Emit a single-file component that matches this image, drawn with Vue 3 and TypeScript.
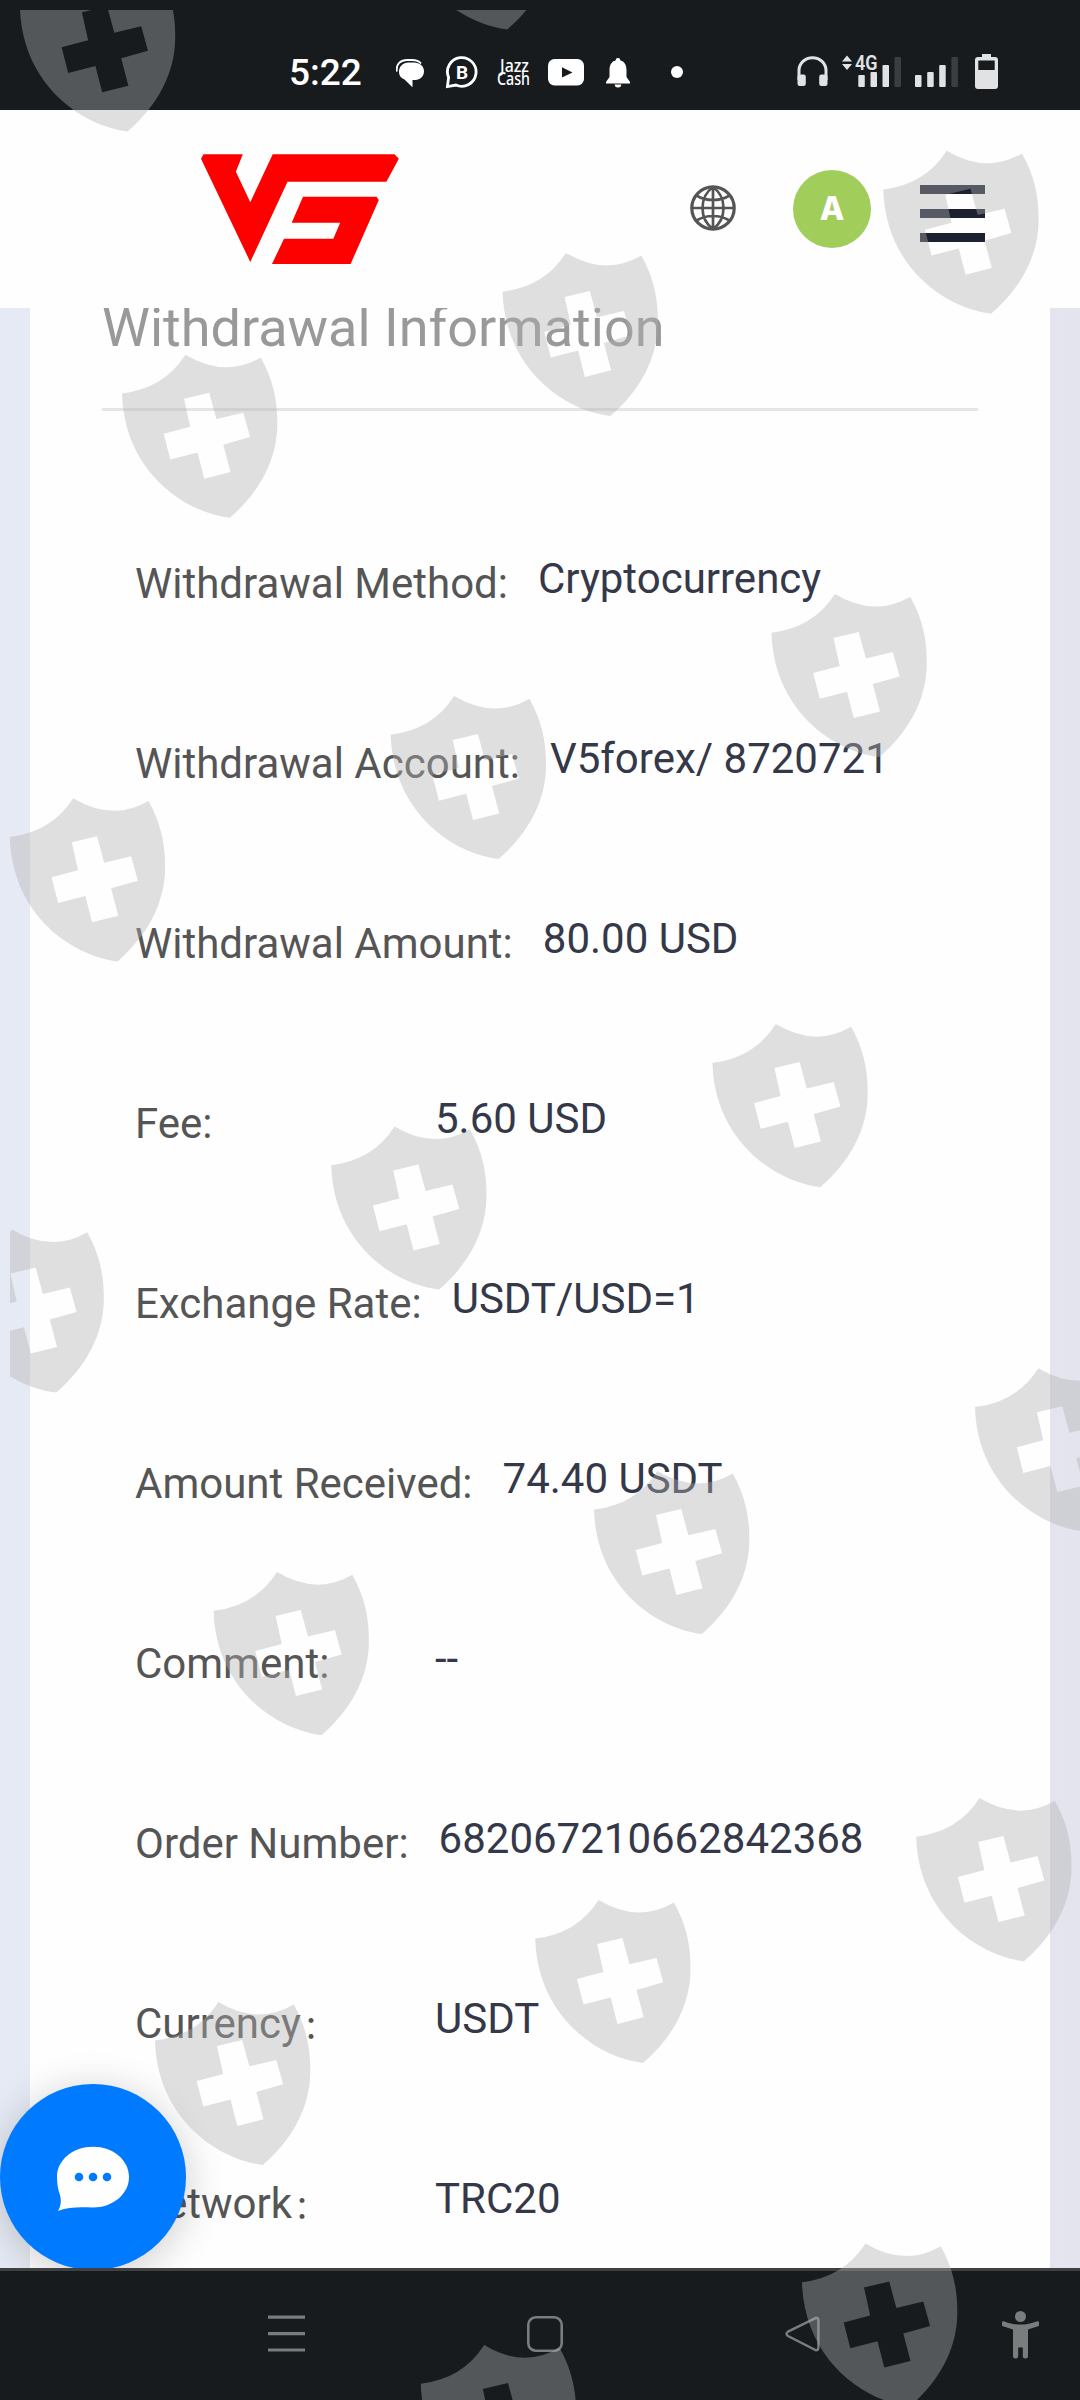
<script setup lang="ts">
interface Field {
  label: string
  colon: string
  value: string
}

interface Mark {
  x: number
  y: number
}

const fields: Field[] = [
  { label: 'Withdrawal Method', colon: ':', value: 'Cryptocurrency' },
  { label: 'Withdrawal Account', colon: ':', value: 'V5forex/ 8720721' },
  { label: 'Withdrawal Amount', colon: ':', value: '80.00 USD' },
  { label: 'Fee', colon: ':', value: '5.60 USD' },
  { label: 'Exchange Rate', colon: ':', value: 'USDT/USD=1' },
  { label: 'Amount Received', colon: ':', value: '74.40 USDT' },
  { label: 'Comment', colon: ':', value: '--' },
  { label: 'Order Number', colon: ':', value: '682067210662842368' },
  { label: 'Currency', colon: '：', value: 'USDT' },
  { label: 'Network', colon: '：', value: 'TRC20' },
]

// Watermark stamps, tiled over the whole screen
const marks: Mark[] = [
  { x: 19.9, y: -32 },
  { x: 399.4, y: -134 },
  { x: 883.3, y: 150.4 },
  { x: 502.6, y: 252.6 },
  { x: 122, y: 354.4 },
  { x: 771.5, y: 593.7 },
  { x: 390.7, y: 695.7 },
  { x: 9.8, y: 798 },
  { x: 712.4, y: 1023.8 },
  { x: 331.2, y: 1126.2 },
  { x: -51.5, y: 1229.2 },
  { x: 975, y: 1368 },
  { x: 594, y: 1470.6 },
  { x: 213.6, y: 1571.8 },
  { x: 916.2, y: 1797.8 },
  { x: 535.2, y: 1899.6 },
  { x: 155, y: 2001.6 },
  { x: 802, y: 2243.2 },
  { x: 420.8, y: 2344.8 },
]
</script>

<template>
  <div class="screen">
    <div class="statusbar">
      <span class="time">5:22</span>
      <svg class="s-chat" width="28" height="28" viewBox="0 0 28 28">
        <path d="M.9 12.500C-.5 5 5 1 11 1h5c4 0 7 1 9 3.500" fill="none" stroke="#fff" stroke-width="1.900" />
        <path d="M12.500 3.500h5c6.500 0 10.500 3.800 10.500 8.800s-4 8.700-8.500 8.700H16.500V28.300L8.500 20.500C4.500 19 3 16 3 12.500c0-5 4-9 9.500-9z" fill="#fff" />
      </svg>
      <svg class="s-biz" width="34" height="34" viewBox="0 0 34 34">
        <path d="M3.600 22.500A14.300 14.300 0 1 1 11 30L2.400 31.600z" fill="none" stroke="#fff" stroke-width="2.800" />
        <text x="17" y="23.600" text-anchor="middle" font-family="Roboto, sans-serif" font-weight="700" font-size="19" fill="#fff">B</text>
      </svg>
      <svg class="s-jazz" width="33" height="34" viewBox="0 0 33 34" font-family="'Noto Sans', sans-serif" font-weight="500" font-size="18" fill="#fff">
        <text x="3" y="16.500" textLength="29" lengthAdjust="spacingAndGlyphs">Jazz</text>
        <text x="0" y="30" textLength="33" lengthAdjust="spacingAndGlyphs">Cash</text>
      </svg>
      <svg class="s-tube" width="36" height="27" viewBox="0 0 36 27">
        <rect width="36" height="26.500" rx="6.500" fill="#fff" />
        <path d="M14 8.200l10.500 5.200L14 18.600z" fill="#171b1e" />
      </svg>
      <svg class="s-bell" width="24" height="30" viewBox="0 0 24 30">
        <path d="M12 0a2.400 2.400 0 0 1 2.400 2.400C19 3.600 20.500 7.500 20.500 12v7L24 24v1.400H0V24l3.500-5v-7C3.500 7.500 5 3.600 9.600 2.400A2.400 2.400 0 0 1 12 0zM8.700 26.500h6.600a3.300 3 0 0 1-6.600 0z" fill="#fff" />
      </svg>
      <span class="s-dot"></span>
      <svg class="s-head" width="31" height="30" viewBox="0 0 31 30">
        <path d="M2 24V14.500a13.500 12.800 0 0 1 27 0V24" fill="none" stroke="#e0e2e3" stroke-width="3" />
        <rect x=".5" y="18.500" width="8.300" height="11.500" rx="2.200" fill="#e0e2e3" />
        <rect x="22.200" y="18.500" width="8.300" height="11.500" rx="2.200" fill="#e0e2e3" />
      </svg>
      <svg class="s-sig1" width="61" height="34" viewBox="0 0 61 34">
        <path d="M0 7.500l5-6 5 6zM0 10h10l-5 6z" fill="#e0e2e3" />
        <text x="13" y="16.300" font-family="Roboto, sans-serif" font-weight="600" font-size="21" textLength="22.500" lengthAdjust="spacingAndGlyphs" fill="#e0e2e3">4G</text>
        <rect x="16.300" y="21" width="6.500" height="12" rx="1" fill="#e0e2e3" />
        <rect x="28.500" y="18" width="6.500" height="15" rx="1" fill="#e0e2e3" />
        <rect x="40.500" y="11" width="6.500" height="22" rx="1" fill="#e0e2e3" />
        <rect x="52.500" y="3" width="6.500" height="30" rx="1" fill="#3b3e41" />
      </svg>
      <svg class="s-sig2" width="44" height="34" viewBox="0 0 44 34">
        <rect x="0" y="21" width="6.500" height="12" rx="1" fill="#e0e2e3" />
        <rect x="12.200" y="18" width="6.500" height="15" rx="1" fill="#e0e2e3" />
        <rect x="24.200" y="11" width="6.500" height="22" rx="1" fill="#e0e2e3" />
        <rect x="36.400" y="3" width="6.500" height="30" rx="1" fill="#3b3e41" />
      </svg>
      <svg class="s-batt" width="23" height="35" viewBox="0 0 23 35">
        <path fill-rule="evenodd" d="M7 0h9v3h4a3 3 0 0 1 3 3v26a3 3 0 0 1-3 3H3a3 3 0 0 1-3-3V6a3 3 0 0 1 3-3h4zM3.300 6.500V16h16.400V6.500z" fill="#e0e2e3" />
      </svg>
    </div>

    <header class="header">
      <svg class="logo" width="198" height="110" viewBox="201 154 198 110">
        <path fill="#fd0100" d="M203.500 154.300H242.800L235.900 171.700 250.300 202.300 272.700 154.300H394.500L398.800 158.700 386.400 181.800H287.500L250.300 262 201 158.700zM303 196.700H376.500L378.800 200 350.600 264H272L284 238.700H333.300L340.200 222.700H291.700z" />
      </svg>
      <svg class="globe" width="46" height="46" viewBox="0 0 46 46" fill="none" stroke="#555" stroke-width="3.200">
        <circle cx="23" cy="23" r="21.200" />
        <path d="M23 2v42M2 23h42M23 2C9 12 9 34 23 44M23 2c14 10 14 32 0 42M6.500 10.500C16 16.500 30 16.500 39.500 10.500M6.500 35.500C16 29.500 30 29.500 39.500 35.500" stroke-width="2.700" />
      </svg>
      <div class="avatar">A</div>
      <div class="burger"><i></i><i></i><i></i></div>
    </header>

    <main class="page">
      <section class="card">
        <h1 class="title">Withdrawal Information</h1>
        <div class="fields">
          <div v-for="f in fields" :key="f.label" class="field">
            <span class="label">{{ f.label }}<span :class="{ wide: f.colon === '：' }">{{ f.colon }}</span></span>
            <span class="value">{{ f.value }}</span>
          </div>
        </div>
      </section>
      <button class="chat" aria-label="Chat">
        <svg width="74" height="66" viewBox="0 0 74 66">
          <path d="M37 .8C57 .8 73 14 73 31S57 61.500 37 61.500C27 61.500 15 60 2 65 5 60 5.500 55 4 49 2 44 1 38 1 31 1 14 17 .8 37 .8z" fill="#fff" />
          <circle cx="23" cy="31" r="4.300" fill="#007aff" />
          <circle cx="37" cy="31" r="4.300" fill="#007aff" />
          <circle cx="51" cy="31" r="4.300" fill="#007aff" />
        </svg>
      </button>
    </main>

    <nav class="navbar">
      <svg class="n-menu" width="37" height="38" viewBox="0 0 37 38">
        <path d="M0 2.200h37M0 18.600h37M0 35h37" stroke="#7a7d7e" stroke-width="3.200" />
      </svg>
      <svg class="n-home" width="36" height="36" viewBox="0 0 36 36">
        <rect x="1.300" y="1.300" width="33.400" height="33.400" rx="7.500" fill="none" stroke="#7a7d7e" stroke-width="2.600" />
      </svg>
      <svg class="n-back" width="36" height="36" viewBox="0 0 36 36">
        <path d="M31 1.800L3 15.600q-3 2.200 0 4.400L31 34.200q2.400 0 2.400-2.400V4.200Q33.400 1.800 31 1.800z" fill="none" stroke="#7a7d7e" stroke-width="2.400" />
      </svg>
      <svg class="n-person" width="37" height="48" viewBox="0 0 37 48" fill="#7a7d7e">
        <circle cx="18.500" cy="5.500" r="5.500" />
        <path d="M2.500 10.500C12 14.600 25 14.600 34.500 10.500a2.400 2.400 0 0 1 1.500 4.700L26 18.600V45q0 2.500-2.600 2.500T20.800 45V36.500H16.200V45q0 2.500-2.600 2.500T11 45V18.600L1 15.200a2.400 2.400 0 0 1 1.500-4.700z" />
      </svg>
    </nav>

    <svg class="watermark" width="1080" height="2400" viewBox="0 0 1080 2400">
      <defs>
        <clipPath id="bounds"><rect x="10" y="10" width="1070" height="2390" /></clipPath>
        <path
          id="shield"
          fill-rule="evenodd"
          d="M0 39Q42 34 63.400 .3Q103 24 138.700 3C150.500 24 155.500 45 155.300 69C155.500 105 137.500 138 107.800 163.400C60 157.500 2 115 0 39zM62 44.300L68.200 72.300 41.700 79.300 48.300 105 75.500 98 82.300 124.300 108.500 117.700 101.300 90.300 128.100 82.700 121.300 58.300 94.400 64.700 87.200 38.300z"
        />
      </defs>
      <g clip-path="url(#bounds)" fill="rgb(177, 178, 177)" fill-opacity="0.4">
        <use v-for="(m, i) in marks" :key="i" href="#shield" :x="m.x" :y="m.y" />
      </g>
    </svg>
  </div>
</template>

<style>
body {
  margin: 0;
}
</style>

<style scoped>
.screen {
  position: relative;
  display: flex;
  flex-direction: column;
  width: 1080px;
  height: 2400px;
  overflow: hidden;
  background: #fefefe;
  font-family: Roboto, "Noto Sans CJK SC", sans-serif;
}

.screen svg {
  flex: none;
  display: block;
}

.statusbar {
  display: flex;
  align-items: flex-start;
  box-sizing: border-box;
  height: 110px;
  padding-left: 289px;
  background: #171b1e;
}

.time {
  width: 73px;
  margin: 51px 34px 0 0;
  color: #fff;
  font-size: 37px;
  font-weight: 500;
  line-height: 43px;
  white-space: nowrap;
}

.s-chat {
  margin: 59px 21px 0 0;
}

.s-biz {
  margin: 55px 18px 0 0;
}

.s-jazz {
  margin: 55px 18px 0 0;
}

.s-tube {
  margin: 59px 22px 0 0;
}

.s-bell {
  margin: 58px 41px 0 0;
}

.s-dot {
  width: 12px;
  height: 12px;
  margin: 66px 114px 0 0;
  border-radius: 50%;
  background: #fff;
}

.s-head {
  margin: 56px 14px 0 0;
}

.s-sig1 {
  margin: 54px 12px 0 0;
}

.s-sig2 {
  margin: 54px 16px 0 0;
}

.s-batt {
  margin-top: 54px;
}

.header {
  position: relative;
  z-index: 1;
  display: flex;
  align-items: center;
  box-sizing: border-box;
  height: 198px;
  padding-left: 201px;
  background: #fefefe;
}

.globe {
  margin: -2px 57px 0 291px;
}

.avatar {
  display: flex;
  align-items: center;
  justify-content: center;
  width: 78px;
  height: 78px;
  margin-right: 49px;
  border-radius: 50%;
  background: #a1cd5b;
  color: #fff;
  font: 800 32px/1 Inter, sans-serif;
}

.burger {
  display: flex;
  flex-direction: column;
  gap: 15px;
  width: 65px;
  margin-top: 9px;
}

.burger i {
  height: 9px;
  background: #1c2131;
}

.page {
  position: relative;
  display: flex;
  box-sizing: border-box;
  height: 1960px;
  padding: 0 30px;
  overflow: hidden;
  background: linear-gradient(90deg, #e6eaf4, #e3e4ee);
}

.card {
  flex: 1;
  box-sizing: border-box;
  padding: 0 72px;
  background: #fefefe;
}

.title {
  margin: -10px 0 0;
  padding-bottom: 50px;
  border-bottom: 3px solid #e5e5e5;
  color: #999;
  font-size: 54px;
  font-weight: 400;
  line-height: 60px;
  white-space: nowrap;
}

.fields {
  padding: 137.500px 0 0 33px;
}

.field {
  display: flex;
  height: 180px;
  font-size: 42px;
  line-height: 60px;
  white-space: nowrap;
}

.label {
  min-width: 270px;
  margin-right: 30px;
  padding-top: 5px;
  color: #555;
}

.wide {
  margin-left: 2px;
  font-size: 32px;
  line-height: 1;
}

.value {
  color: #343849;
}

.chat {
  position: absolute;
  left: 0;
  bottom: -2px;
  display: flex;
  align-items: center;
  justify-content: center;
  width: 186px;
  height: 186px;
  padding: 4px 0 0;
  border: 0;
  border-radius: 50%;
  background: #007aff;
  box-shadow: 0 6px 40px rgba(0, 0, 0, 0.2);
}

.navbar {
  display: flex;
  align-items: flex-start;
  box-sizing: border-box;
  height: 132px;
  padding-left: 268px;
  border-top: 3px solid #3e4041;
  background: #171b1e;
}

.n-menu {
  margin: 44px 222px 0 0;
}

.n-home {
  margin: 45px 222px 0 0;
}

.n-back {
  margin: 45px 181px 0 0;
}

.n-person {
  margin-top: 40px;
}

.watermark {
  position: absolute;
  z-index: 2;
  top: 0;
  left: 0;
  pointer-events: none;
}
</style>
